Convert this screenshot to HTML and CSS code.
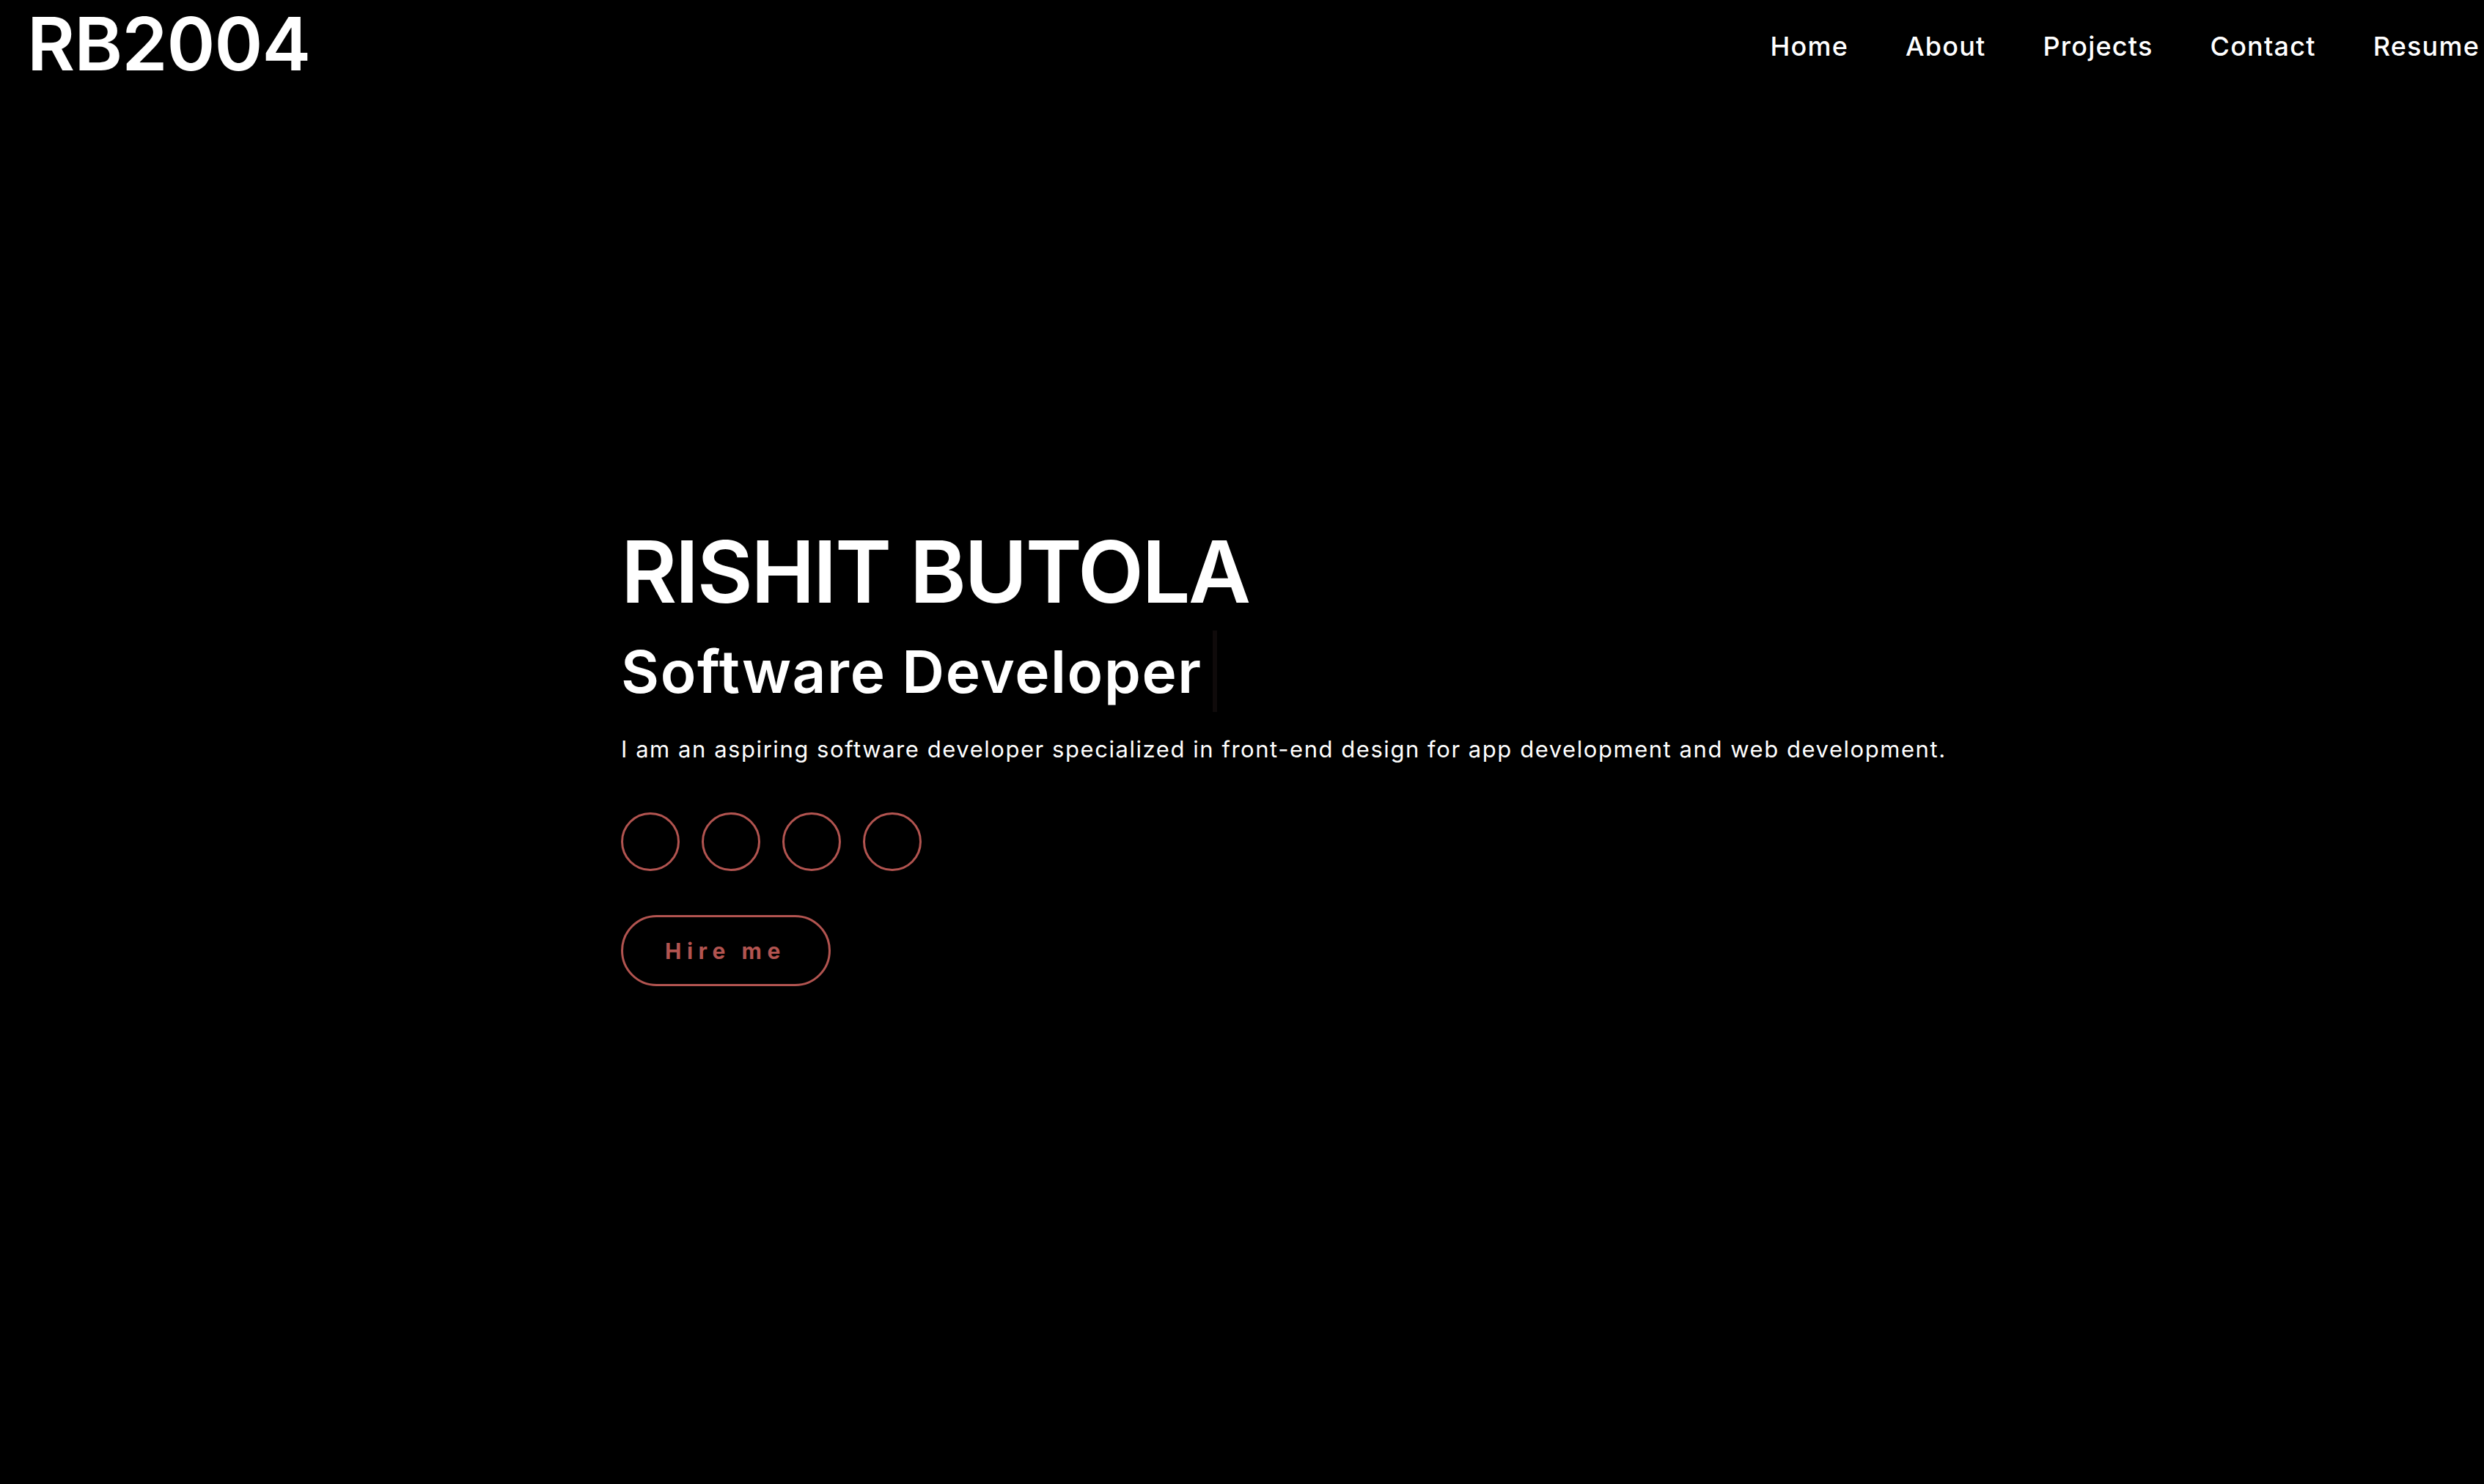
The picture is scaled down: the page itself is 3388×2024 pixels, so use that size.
FILE: index.html
```html
<!DOCTYPE html>
<html lang="en">
<head>
<meta charset="utf-8">
<title>RB2004</title>
<link rel="stylesheet" href="styles.css">
</head>
<body>
<header class="header">
  <a class="logo" href="#">RB2004</a>
  <nav class="nav">
    <a class="nav-link" href="#">Home</a>
    <a class="nav-link" href="#">About</a>
    <a class="nav-link" href="#">Projects</a>
    <a class="nav-link" href="#">Contact</a>
    <a class="nav-link" href="#">Resume</a>
  </nav>
</header>
<main class="hero">
  <h1 class="hero-name">RISHIT BUTOLA</h1>
  <h2 class="hero-role">Software Developer</h2>
  <p class="hero-text">I am an aspiring software developer specialized in front-end design for app development and web development.</p>
  <div class="socials">
    <a class="social" href="#"></a>
    <a class="social" href="#"></a>
    <a class="social" href="#"></a>
    <a class="social" href="#"></a>
  </div>
  <a class="hire-btn" href="#">Hire me</a>
</main>
</body>
</html>
```

FILE: styles.css
```css
* { box-sizing: border-box; }
html, body {
  margin: 0;
  padding: 0;
  background: #000;
  color: #fff;
  font-family: "Inter", "Noto Sans", sans-serif;
  overflow: hidden;
}
a { text-decoration: none; color: inherit; }

.header {
  display: flex;
  justify-content: space-between;
  align-items: flex-start;
  padding: 10px 0 0 37px;
  height: 110px;
}
.logo {
  font-size: 100px;
  line-height: 100px;
  font-weight: 600;
  letter-spacing: -1px;
}
.nav {
  display: flex;
  margin-top: 33px;
  margin-right: 6px;
}
.nav-link {
  font-size: 36px;
  line-height: 40px;
  font-weight: 500;
  letter-spacing: 1.2px;
  margin-left: 78px;
}

.hero {
  padding: 600px 0 0 25%;
  display: flex;
  flex-direction: column;
  align-items: flex-start;
}
.hero-name {
  margin: 0;
  font-size: 117px;
  line-height: 140px;
  font-weight: 600;
  letter-spacing: -2.5px;
}
.hero-role {
  margin: 10px 0 0;
  font-size: 80px;
  line-height: 111px;
  font-weight: 600;
  letter-spacing: 1.6px;
  padding-right: 14px;
  border-right: 6px solid #0f0a0a;
}
.hero-text {
  margin: 29px 0 0;
  font-size: 31px;
  line-height: 44px;
  font-weight: 400;
  letter-spacing: 1.55px;
}
.socials {
  display: flex;
  gap: 30px;
  margin-top: 64px;
}
.social {
  width: 80px;
  height: 80px;
  border: 3px solid #b25450;
  border-radius: 50%;
}
.hire-btn {
  margin-top: 60px;
  width: 286px;
  height: 97px;
  border: 3px solid #b25450;
  border-radius: 50px;
  color: #b25450;
  font-size: 30px;
  font-weight: 700;
  letter-spacing: 7.5px;
  display: flex;
  align-items: center;
  padding-left: 57px;
}
```
